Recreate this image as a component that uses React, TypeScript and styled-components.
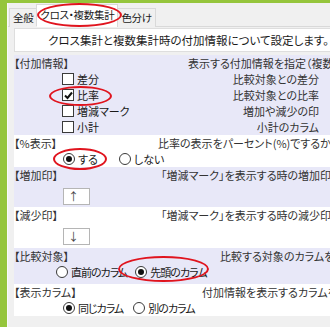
import styled, { createGlobalStyle } from "styled-components";

const GlobalStyle = createGlobalStyle`
  html, body {
    margin: 0;
    padding: 0;
    overflow: hidden;
    background: #f0f0f0;
  }
  body {
    font-family: "Noto Sans CJK JP", "Noto Sans", sans-serif;
    font-size: 11px;
    color: #1a1a1a;
    font-feature-settings: "palt";
  }
`;

const Frame = styled.div`
  position: relative;
  width: 330px;
  height: 327px;
  box-sizing: border-box;
  border-top: 3px solid #95c53c;
  border-left: 7px solid #95c53c;
  overflow: hidden;
`;

const Inner = styled.div`
  border-left: 1px solid #fafafa;
  height: 100%;
`;

const TabBar = styled.div`
  display: flex;
  align-items: flex-end;
  height: 23px;
  padding-left: 2px;
  border-bottom: 1px solid #d9d9d9;
`;

const Tab = styled.div<{ $active?: boolean }>`
  box-sizing: border-box;
  height: ${(p) => (p.$active ? 23 : 19)}px;
  line-height: ${(p) => (p.$active ? 20 : 17)}px;
  padding: 0 3px;
  margin-left: -1px;
  margin-bottom: -1px;
  border: 1px solid #d9d9d9;
  border-bottom: ${(p) => (p.$active ? "1px solid #fff" : "none")};
  background: ${(p) => (p.$active ? "#fff" : "#f0f0f0")};
  font-size: 10.5px;
  letter-spacing: -0.3px;
  white-space: nowrap;
`;

const Panel = styled.div`
  padding: 1px 0 0 6px;
`;

const Header = styled.div`
  box-sizing: border-box;
  height: 24px;
  line-height: 22px;
  background: #fff;
  border: 1px solid #dedede;
  border-right: none;
  padding-left: 33px;
  font-size: 11.5px;
  white-space: nowrap;
  margin-bottom: 3px;
`;

const Section = styled.div<{ $shade?: boolean; $pb?: number }>`
  background: ${(p) => (p.$shade ? "#e8e8f8" : "#fff")};
  padding-bottom: ${(p) => p.$pb ?? 0}px;
`;

const TitleRow = styled.div<{ $descX: number }>`
  display: grid;
  grid-template-columns: ${(p) => p.$descX}px 1fr;
  height: 16px;
  line-height: 16px;
  white-space: nowrap;
`;

const Label = styled.span`
  color: #333;
`;

const Desc = styled.span`
  color: #333;
`;

const CheckRow = styled.div`
  display: flex;
  align-items: center;
  height: 16px;
  line-height: 16px;
  padding-left: 48px;
  white-space: nowrap;
`;

const CheckText = styled.span`
  flex: 1;
  margin-left: 3px;
`;

const Note = styled.span`
  color: #333;
  padding-right: 11px;
`;

const Box = styled.span`
  display: inline-flex;
  align-items: center;
  justify-content: center;
  width: 10px;
  height: 10px;
  border: 1px solid #3a3a3a;
  background: #fff;
`;

const RadioRow = styled.div<{ $indent: number; $gap: number; $tight?: boolean }>`
  display: flex;
  gap: ${(p) => p.$gap}px;
  height: 16px;
  line-height: 16px;
  padding-left: ${(p) => p.$indent}px;
  letter-spacing: ${(p) => (p.$tight ? "-1px" : "0")};
  white-space: nowrap;
`;

const RadioItem = styled.label`
  display: flex;
  align-items: center;
  gap: 3px;
`;

const Circle = styled.span<{ $on?: boolean }>`
  display: inline-flex;
  align-items: center;
  justify-content: center;
  width: 10px;
  height: 10px;
  border: 1px solid #3a3a3a;
  border-radius: 50%;
  background: #fff;
  &::after {
    content: "";
    width: 6px;
    height: 6px;
    border-radius: 50%;
    background: ${(p) => (p.$on ? "#111" : "transparent")};
  }
`;

const InputRow = styled.div`
  padding: 5px 0 2px 49px;
`;

const MarkInput = styled.div`
  box-sizing: border-box;
  width: 27px;
  height: 17px;
  line-height: 15px;
  border: 1px solid #b5b5b5;
  background: #fff;
  padding-left: 4px;
  color: #444;
`;

const Ring = styled.div`
  position: absolute;
  box-sizing: border-box;
  border: 2px solid #e0141e;
  border-radius: 50%;
  pointer-events: none;
`;

const Check = ({ on }: { on?: boolean }) => (
  <Box>
    {on && (
      <svg width="9" height="9" viewBox="0 0 9 9">
        <path d="M1 4.5 L3.5 7 L8 1.5" stroke="#111" strokeWidth="2" fill="none" />
      </svg>
    )}
  </Box>
);

const Radio = ({ on, text }: { on?: boolean; text: string }) => (
  <RadioItem>
    <Circle $on={on} />
    <span>{text}</span>
  </RadioItem>
);

const items = [
  { name: "差分", note: "比較対象との差分" },
  { name: "比率", note: "比較対象との比率", on: true },
  { name: "増減マーク", note: "増加や減少の印" },
  { name: "小計", note: "小計のカラム" },
];

export default function App() {
  return (
    <>
      <GlobalStyle />
      <Frame>
        <Inner>
          <TabBar>
            <Tab>全般</Tab>
            <Tab $active>クロス・複数集計</Tab>
            <Tab>色分け</Tab>
          </TabBar>
          <Panel>
            <Header>クロス集計と複数集計時の付加情報について設定します。</Header>

            <Section $shade>
              <TitleRow $descX={174}>
                <Label>【付加情報】</Label>
                <Desc>表示する付加情報を指定（複数選択可）</Desc>
              </TitleRow>
              {items.map((it) => (
                <CheckRow key={it.name}>
                  <Check on={it.on} />
                  <CheckText>{it.name}</CheckText>
                  <Note>{it.note}</Note>
                </CheckRow>
              ))}
            </Section>

            <Section>
              <TitleRow $descX={144}>
                <Label>【%表示】</Label>
                <Desc>比率の表示をパーセント(%)でするかを指定</Desc>
              </TitleRow>
              <RadioRow $indent={49} $gap={21}>
                <Radio on text="する" />
                <Radio text="しない" />
              </RadioRow>
            </Section>

            <Section $shade>
              <TitleRow $descX={147}>
                <Label>【増加印】</Label>
                <Desc>「増減マーク」を表示する時の増加印を指定</Desc>
              </TitleRow>
              <InputRow>
                <MarkInput>↑</MarkInput>
              </InputRow>
            </Section>

            <Section $pb={1}>
              <TitleRow $descX={147}>
                <Label>【減少印】</Label>
                <Desc>「増減マーク」を表示する時の減少印を指定</Desc>
              </TitleRow>
              <InputRow>
                <MarkInput>↓</MarkInput>
              </InputRow>
            </Section>

            <Section $shade $pb={4}>
              <TitleRow $descX={206}>
                <Label>【比較対象】</Label>
                <Desc>比較する対象のカラムを指定</Desc>
              </TitleRow>
              <RadioRow $indent={42} $gap={8} $tight>
                <Radio text="直前のカラム" />
                <Radio on text="先頭のカラム" />
              </RadioRow>
            </Section>

            <Section>
              <TitleRow $descX={188}>
                <Label>【表示カラム】</Label>
                <Desc>付加情報を表示するカラムを指定</Desc>
              </TitleRow>
              <RadioRow $indent={49} $gap={10} $tight>
                <Radio on text="同じカラム" />
                <Radio text="別のカラム" />
              </RadioRow>
            </Section>
          </Panel>
        </Inner>
        <Ring style={{ left: 30, top: 0, width: 85, height: 24 }} />
        <Ring style={{ left: 42, top: 83, width: 63, height: 20 }} />
        <Ring style={{ left: 46, top: 145, width: 54, height: 22 }} />
        <Ring style={{ left: 111, top: 253, width: 91, height: 26 }} />
      </Frame>
    </>
  );
}
